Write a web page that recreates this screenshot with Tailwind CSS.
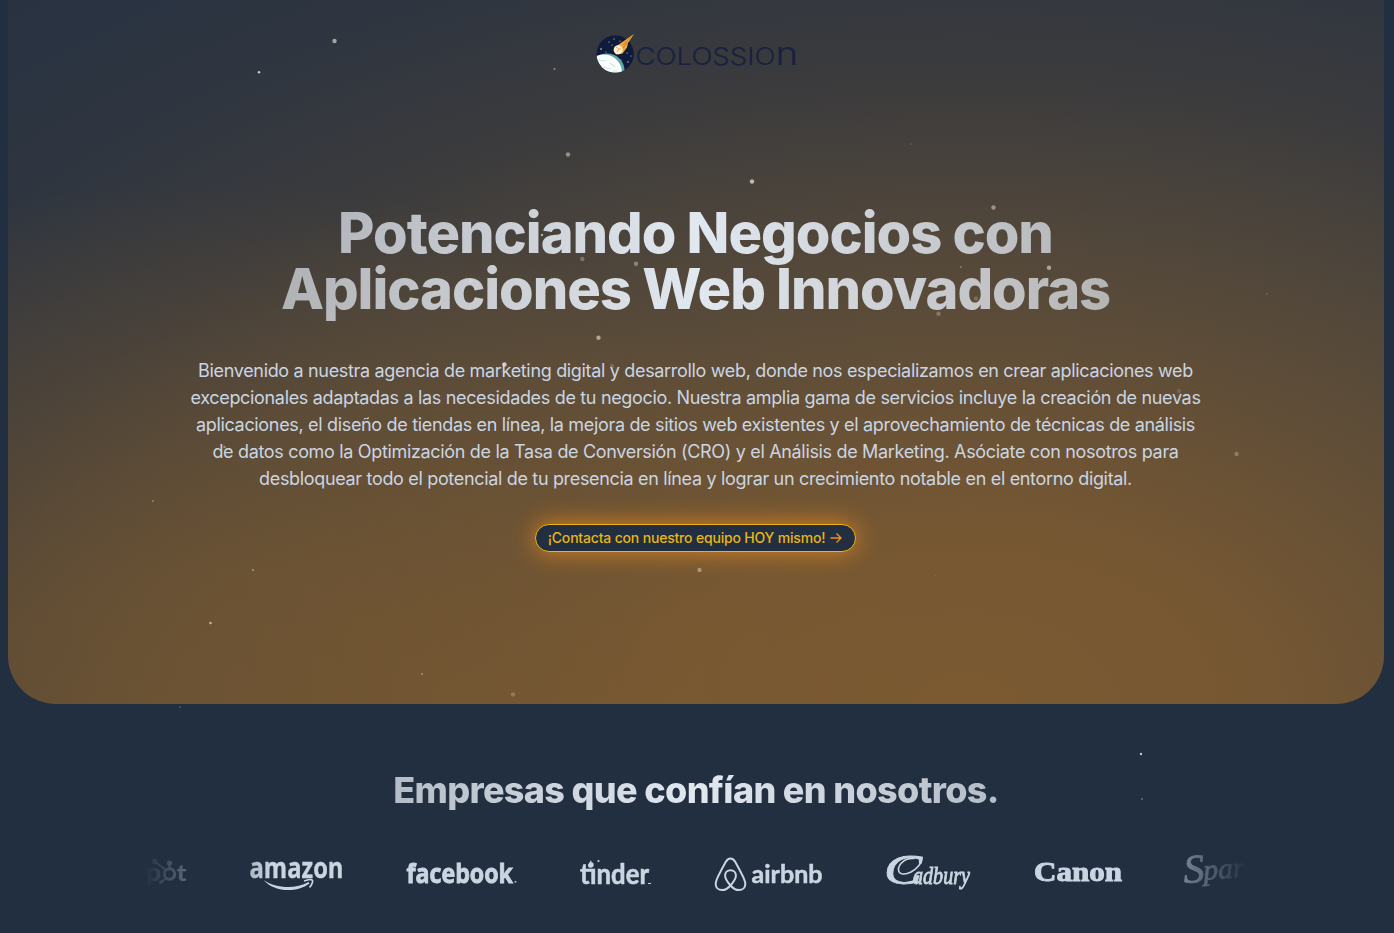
<!DOCTYPE html>
<html lang="es">
<head>
<meta charset="utf-8">
<title>Colossion</title>
<script src="https://cdn.jsdelivr.net/npm/@tailwindcss/browser@4"></script>
</head>
<body class="relative h-screen overflow-hidden bg-[#222f40] font-['Inter',sans-serif] text-slate-300 antialiased">
<main class="flex flex-col">
  <section class="ml-2 mr-[10px] flex h-[704px] flex-col items-center rounded-b-[48px] bg-[radial-gradient(ellipse_740px_600px_at_200px_780px,#805c2ea0_0%,#805c2e88_35%,#805c2e42_68%,#805c2e00_100%),radial-gradient(ellipse_1380px_850px_at_960px_704px,#7b5a31_0%,#755733_22%,#4f463b_57%,#3b3b3d_74%,#2e3540_92%,#273242_110%)]">
    <header class="pt-[30px]">
      <svg class="block h-12 w-[202px] overflow-visible" viewBox="595 30 202 48" aria-label="Colossion">
        <defs><clipPath id="globe"><circle cx="615.200" cy="54" r="18.600"/></clipPath></defs>
        <circle cx="615.200" cy="54" r="18.600" fill="#101a3b"/>
        <g clip-path="url(#globe)">
          <circle cx="607" cy="71" r="17.600" fill="#5fa5a6"/>
          <circle cx="604" cy="72.500" r="18" fill="#fbfdfc"/>
          <path d="M598 60l8 1M603 67l8 2M610 63l5 4M613 71h5" stroke="#d4e4e5" stroke-width="1.200"/>
          <g fill="#dfe5ed"><circle cx="609" cy="42" r=".6"/><circle cx="614" cy="39" r=".6"/><circle cx="601" cy="49" r=".8"/><circle cx="606" cy="52" r=".5"/><circle cx="627" cy="53" r=".6"/><circle cx="620" cy="41" r=".5"/><circle cx="628" cy="62" r=".7"/><circle cx="621" cy="60" r=".5"/><circle cx="612" cy="45" r=".5"/><circle cx="631" cy="56" r=".5"/></g>
        </g>
        <path d="M634 34L618 45l-4.500 5.500 2.500 4 6.500-1 4.500-6 1-4.500z" fill="#f3a638"/>
        <path d="M631 37l-8 8M627 42l-4 6" stroke="#ca7c27" stroke-width=".8"/>
        <circle cx="618.200" cy="49.800" r="4.500" fill="#fff0d2"/>
        <path d="M616 47l3 2-2 3M620 48v2" stroke="#f1a747" fill="none"/>
        <g fill="#18213e" stroke="#18213e" stroke-width=".2" class="font-['Inter'] font-light">
          <text x="635.500" y="65" textLength="140" lengthAdjust="spacingAndGlyphs" class="text-[24.600px]">COLOSSIO</text>
          <text x="775.500" y="65" textLength="22.500" lengthAdjust="spacingAndGlyphs" class="text-[32px]">n</text>
        </g>
      </svg>
    </header>
    <h1 class="mt-[127px] mr-px w-[1024px] bg-gradient-to-r from-slate-200/60 via-slate-200 to-slate-200/60 bg-clip-text pb-4 text-center text-[56px] leading-[56px] font-extrabold tracking-[-1.04px] whitespace-nowrap text-transparent">Potenciando Negocios con<br>Aplicaciones Web Innovadoras</h1>
    <p class="mt-6 mr-px w-[1024px] text-center text-[18px] leading-[27px] tracking-[-0.33px] whitespace-nowrap text-slate-300">Bienvenido a nuestra agencia de marketing digital y desarrollo web, donde nos especializamos en crear aplicaciones web<br>excepcionales adaptadas a las necesidades de tu negocio. Nuestra amplia gama de servicios incluye la creación de nuevas<br>aplicaciones, el diseño de tiendas en línea, la mejora de sitios web existentes y el aprovechamiento de técnicas de análisis<br>de datos como la Optimización de la Tasa de Conversión (CRO) y el Análisis de Marketing. Asóciate con nosotros para<br>desbloquear todo el potencial de tu presencia en línea y lograr un crecimiento notable en el entorno digital.</p>
    <a href="#" class="mt-8 mr-px flex h-7 w-[321px] items-center justify-center rounded-full border border-[#edb116] bg-[#222f40] pr-px pb-px text-[14px] font-medium tracking-[-0.18px] whitespace-nowrap text-[#eab516] shadow-[0_0_24px_#d9821f]">¡Contacta con nuestro equipo HOY mismo!
      <svg class="mt-px ml-[5px] h-3 w-3" viewBox="0 0 12 12" fill="none" stroke="#f0901c" stroke-width="1.400"><path d="M.5 6h10M6.500 1.500L11 6l-4.500 4.500"/></svg>
    </a>
  </section>
  <section class="flex flex-col items-center pr-[2px] pt-[64px]">
    <h2 class="w-[1024px] bg-gradient-to-r from-slate-200/60 via-slate-200 to-slate-200/60 bg-clip-text text-center text-[36px] leading-[45px] font-extrabold tracking-[-0.66px] whitespace-nowrap text-transparent">Empresas que confían en nosotros.</h2>
    <div class="mt-9 flex h-12 w-[1104px] gap-16 overflow-hidden fill-slate-300 [mask-image:linear-gradient(to_right,transparent,black_128px,black_976px,transparent)]">
      <svg class="h-12 w-[42px] shrink-0 overflow-visible" viewBox="145 849 42 48" aria-label="HubSpot">
        <text x="147" y="880.500" textLength="15" lengthAdjust="spacingAndGlyphs" class="font-['Lato'] text-[25px] font-bold" stroke="#cbd5e1" stroke-width=".6">p</text>
        <g fill="none" stroke="#cbd5e1"><circle cx="170.500" cy="874" r="5.200" stroke-width="3"/><path d="M170.500 868v-5M167 870l-11-8M167 878l-4 4" stroke-width="2"/></g>
        <circle cx="170.500" cy="863" r="2.600"/><circle cx="155.500" cy="861.500" r="2.800"/><circle cx="162" cy="882" r="2"/>
        <text x="177.500" y="880.500" textLength="10" lengthAdjust="spacingAndGlyphs" class="font-['Lato'] text-[23px] font-black">t</text>
      </svg>
      <svg class="h-12 w-[93px] shrink-0 overflow-visible" viewBox="250 849 93 48">
        <text x="249.500" y="878" textLength="94" lengthAdjust="spacingAndGlyphs" class="font-['Open_Sans'] text-[28.500px] font-bold" stroke="#cbd5e1" stroke-width=".4">amazon</text>
        <path d="M263.500 880C275 888 295 890 308.500 882l1 1.500C296 893.500 274 892 263.500 880z"/>
        <path d="M304 881c4-1.600 7.500-1.600 8.300-.8s0 4.500-2.800 7.300" fill="none" stroke="#cbd5e1" stroke-width="1.700"/>
      </svg>
      <svg class="h-12 w-[110px] shrink-0 overflow-visible" viewBox="407 849 110 48">
        <text x="406.500" y="883" textLength="106.500" lengthAdjust="spacingAndGlyphs" class="font-['Open_Sans'] text-[27.500px] font-bold" stroke="#cbd5e1" stroke-width=".9">facebook</text>
        <circle cx="515.500" cy="881.800" r="1.100" opacity=".7"/>
      </svg>
      <svg class="h-12 w-[70px] shrink-0 overflow-visible" viewBox="581 849 70 48">
        <text x="580" y="884" textLength="69" lengthAdjust="spacingAndGlyphs" class="font-['Lato'] text-[29px] font-bold" stroke="#cbd5e1" stroke-width=".6">tınder</text>
        <path d="M590.500 860.500c0 2-2.800 3-2.600 5 .1 1.500 1.400 2.300 2.800 2.300 1.700 0 3.200-1.200 3-3.300-.1-1.100-.7-2-1.200-2.200 0 .6-.3.900-.7 1 .2-1-.2-2.200-1.300-2.800z"/>
        <circle cx="598.500" cy="861" r="1.100"/><path d="M648 883h3v1h-3z"/>
      </svg>
      <svg class="h-12 w-[107px] shrink-0 overflow-visible" viewBox="715 849 107 48">
        <path d="M730.500 885.500c-4.200-4.800-5.400-7.500-5.400-10 0-3.100 2.300-5.300 5.400-5.300s5.400 2.200 5.400 5.300c0 2.500-1.200 5.200-5.400 10-2.800 3.200-5.500 4.600-8.400 4.600-3.800 0-6.400-2.700-6.400-6.200 0-2.300.8-4.100 2.400-7.500 2.300-4.800 5.200-10.300 7.600-14.500 1.300-2.300 2.700-3.400 4.800-3.400s3.500 1.100 4.800 3.400c2.400 4.200 5.300 9.700 7.600 14.500 1.600 3.400 2.400 5.200 2.400 7.500 0 3.500-2.600 6.200-6.400 6.200-2.900 0-5.600-1.400-8.400-4.600z" fill="none" stroke="#cbd5e1" stroke-width="2"/>
        <text x="751.500" y="882.500" textLength="71" lengthAdjust="spacingAndGlyphs" class="font-['Lato'] text-[25px] font-bold" stroke="#cbd5e1" stroke-width=".5">airbnb</text>
      </svg>
      <svg class="h-12 w-[85px] shrink-0 overflow-visible" viewBox="886 849 85 48">
        <text x="884" y="883.500" textLength="38" lengthAdjust="spacingAndGlyphs" class="font-['Liberation_Serif'] text-[43px] italic" stroke="#cbd5e1" stroke-width=".8">C</text>
        <path d="M914 858.500c-9-1-16 6-15.500 11.500.5 5 7 5 12.500 2 6-3.500 11-9 10.500-13" fill="none" stroke="#cbd5e1" stroke-width="1.600" stroke-linecap="round"/>
        <text x="913" y="883.500" textLength="57" lengthAdjust="spacingAndGlyphs" class="font-['Liberation_Serif'] text-[25px] italic" stroke="#cbd5e1" stroke-width=".9">adbury</text>
      </svg>
      <svg class="h-12 w-[86px] shrink-0 overflow-visible" viewBox="1035 849 86 48">
        <text x="1034" y="880.500" textLength="88" lengthAdjust="spacingAndGlyphs" class="font-['Liberation_Serif'] text-[28px] font-bold" stroke="#cbd5e1" stroke-width="1">Canon</text>
      </svg>
      <svg class="h-12 w-[64px] shrink-0 overflow-visible" viewBox="1185 849 64 48">
        <g stroke="#cbd5e1" stroke-width=".8" class="font-['Liberation_Serif'] italic" transform="rotate(-4 1185 880)">
        <text x="1184" y="883" class="text-[40px]" textLength="21" lengthAdjust="spacingAndGlyphs">S</text>
        <text x="1204" y="881" class="text-[29px]" textLength="54" lengthAdjust="spacingAndGlyphs">park</text>
        </g>
      </svg>
    </div>
  </section>
</main>
<svg class="pointer-events-none absolute inset-0" width="1394" height="933" fill="#eadfd2">
  <circle cx="334.500" cy="41" r="2.200" opacity=".65"/><circle cx="259" cy="72.300" r="1.200" opacity=".9"/><circle cx="554.500" cy="69" r="1" opacity=".5"/>
  <circle cx="568" cy="154.500" r="2.200" opacity=".5"/><circle cx="752" cy="181.500" r="2.200" opacity=".75"/><circle cx="911" cy="144" r="1" opacity=".15"/>
  <circle cx="993.500" cy="207.500" r="2.200" opacity=".5"/><circle cx="542" cy="235" r="1.100" opacity=".9"/><circle cx="582.300" cy="259" r="2.200" opacity=".3"/><circle cx="636" cy="263.700" r="2.200" opacity=".4"/>
  <circle cx="961" cy="267" r="1.100" opacity=".35"/><circle cx="1049" cy="267.700" r="2.200" opacity=".6"/><circle cx="471" cy="280.500" r="2.200" opacity=".4"/><circle cx="976" cy="298.500" r="2.200" fill="#94806c" opacity=".6"/><circle cx="938.500" cy="313.800" r="2.200" opacity=".3"/>
  <circle cx="1267" cy="294" r="1" opacity=".2"/><circle cx="598.500" cy="337.700" r="2.200" opacity=".6"/><circle cx="504.500" cy="364.500" r="2.200" opacity=".8"/><circle cx="612" cy="366" r="2.200" opacity=".2"/>
  <circle cx="1179" cy="391" r="2.200" opacity=".15"/><circle cx="224.500" cy="447" r="1.200" opacity=".5"/><circle cx="1236.500" cy="454" r="2.200" opacity=".3"/><circle cx="153" cy="501" r="1" opacity=".4"/>
  <circle cx="253" cy="570" r="1.100" opacity=".5"/><circle cx="699.500" cy="570" r="2.200" opacity=".45"/><circle cx="935" cy="575.500" r="1.100" opacity=".1"/><circle cx="210.500" cy="623" r="1.200" opacity=".75"/>
  <circle cx="422" cy="674" r="1.100" opacity=".4"/><circle cx="513" cy="694.500" r="2.200" opacity=".25"/><circle cx="180" cy="707" r="1.100" opacity=".2"/><circle cx="1141" cy="754" r="1.200" opacity=".85"/><circle cx="1142" cy="799" r="1.100" opacity=".35"/>
</svg>
</body>
</html>
